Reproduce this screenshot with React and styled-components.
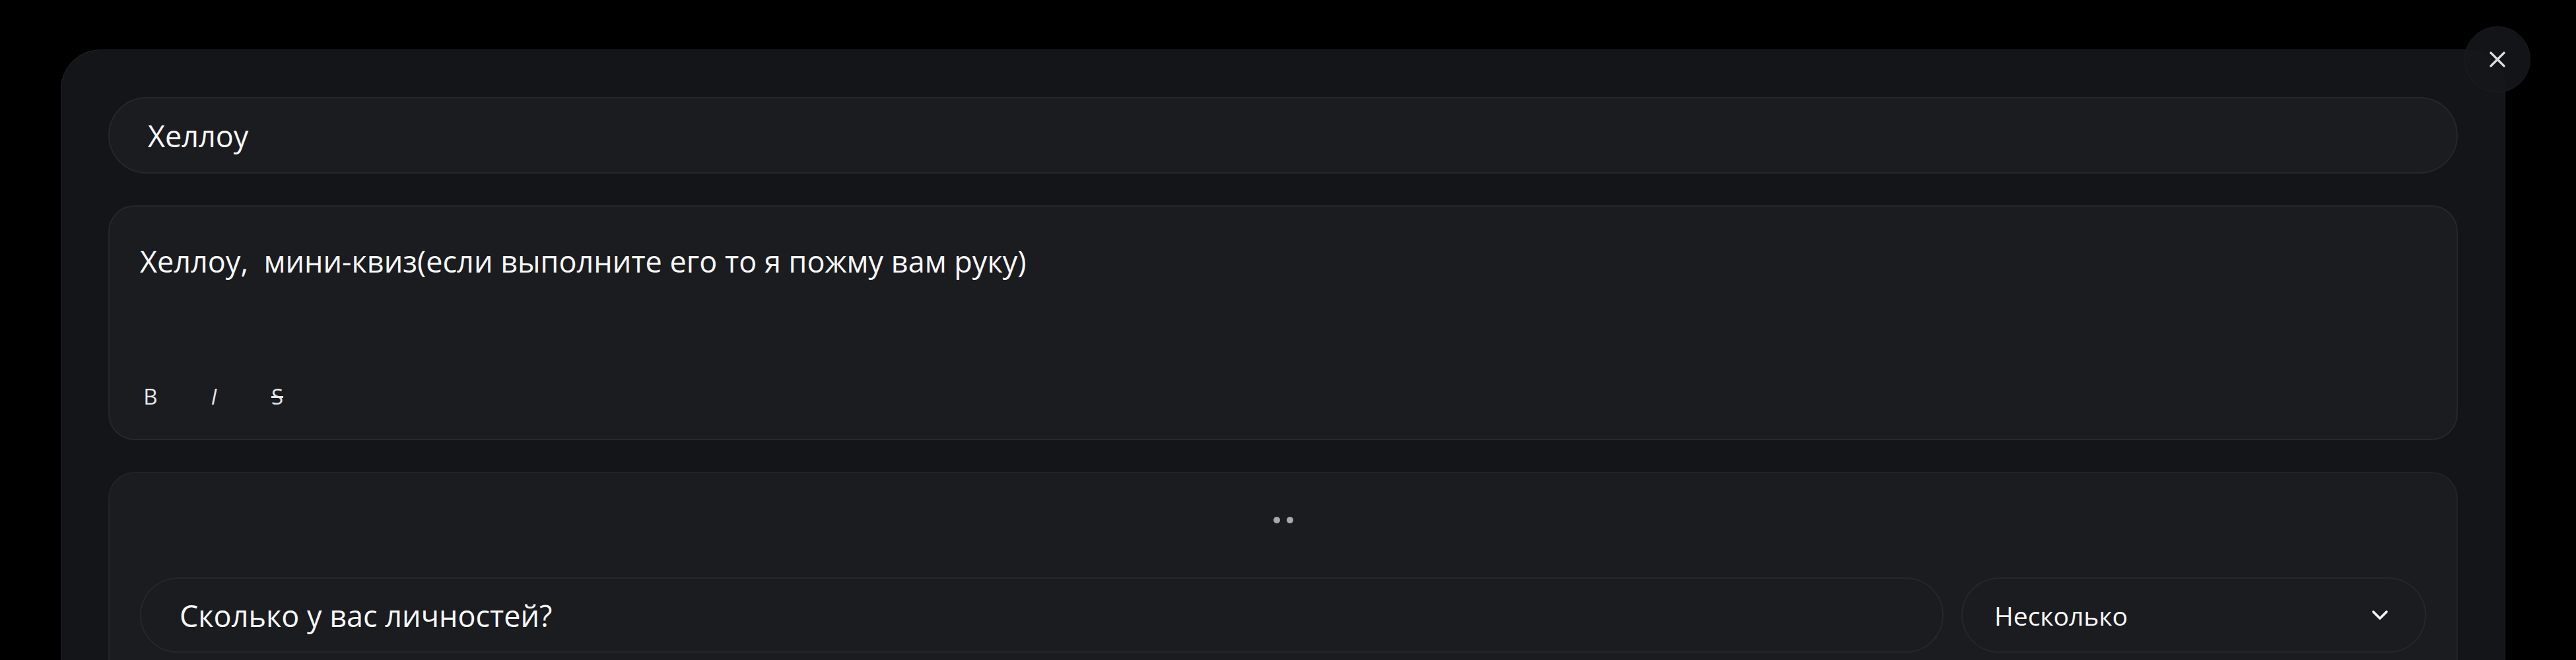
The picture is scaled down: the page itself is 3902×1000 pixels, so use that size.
import React, { useState } from 'react';
import styled, { createGlobalStyle } from 'styled-components';
import { X, ChevronDown } from 'lucide-react';

const GlobalStyle = createGlobalStyle`
  html, body {
    margin: 0;
    padding: 0;
    background: #000;
  }
  body {
    font-family: "Open Sans", "Noto Sans", sans-serif;
    color: #f4f4f5;
  }
  * {
    box-sizing: border-box;
  }
`;

const App = () => {
  const [title, setTitle] = useState('Хеллоу');
  const [question, setQuestion] = useState('Сколько у вас личностей?');

  return (
    <>
      <GlobalStyle />
      <Page>
        <Modal>
          <CloseButton type="button" aria-label="Закрыть">
            <X size={40} strokeWidth={2} />
          </CloseButton>

          <TitleInput value={title} onChange={(e) => setTitle(e.target.value)} />

          <EditorCard>
            <EditorText>Хеллоу,&nbsp; мини-квиз(если выполните его то я пожму вам руку)</EditorText>
            <Toolbar>
              <FormatButton type="button">B</FormatButton>
              <FormatButton type="button" $italic>I</FormatButton>
              <FormatButton type="button" $strike>S</FormatButton>
            </Toolbar>
          </EditorCard>

          <QuestionCard>
            <DragHandle>
              <Dot />
              <Dot />
            </DragHandle>
            <QuestionRow>
              <QuestionInput value={question} onChange={(e) => setQuestion(e.target.value)} />
              <Select type="button">
                <span>Несколько</span>
                <ChevronDown size={40} strokeWidth={2.2} />
              </Select>
            </QuestionRow>
          </QuestionCard>
        </Modal>
      </Page>
    </>
  );
};

const Page = styled.div`
  height: 1000px;
  overflow: hidden;
  padding: 75px 107px 0 92px;
  background: #000;
`;

const Modal = styled.div`
  position: relative;
  display: flex;
  flex-direction: column;
  gap: 48px;
  padding: 71px 71px 200px;
  background: #141518;
  border: 1px solid #232428;
  border-radius: 60px;
`;

const CloseButton = styled.button`
  position: absolute;
  top: -36px;
  right: -39px;
  width: 100px;
  height: 100px;
  border-radius: 50%;
  border: 1px solid rgba(255, 255, 255, 0.03);
  background: rgba(21, 22, 25, 0.9);
  color: #dcdce0;
  display: flex;
  align-items: center;
  justify-content: center;
  cursor: pointer;
  padding: 0;
`;

const PillInput = styled.input`
  height: 116px;
  border-radius: 58px;
  border: 2px solid #26272b;
  background: #1b1c1f;
  color: #f7f7f8;
  font-family: inherit;
  font-size: 45px;
  font-weight: 500;
  padding: 0 58px;
  outline: none;
`;

const TitleInput = styled(PillInput)`
  width: 100%;
`;

const EditorCard = styled.div`
  display: flex;
  flex-direction: column;
  height: 356px;
  padding: 48px 46px;
  background: #1b1c1f;
  border: 2px solid #26272b;
  border-radius: 40px;
`;

const EditorText = styled.div`
  flex: 1;
  font-size: 45px;
  font-weight: 500;
  line-height: 1.55;
  color: #f7f7f8;
`;

const Toolbar = styled.div`
  display: flex;
  align-items: center;
  gap: 56px;
  height: 32px;
  margin-left: -4px;
`;

const FormatButton = styled.button`
  width: 40px;
  height: 32px;
  padding: 0;
  border: none;
  background: none;
  color: #e6e6e8;
  font-family: inherit;
  font-size: 33px;
  line-height: 32px;
  font-weight: 500;
  font-style: ${(p) => (p.$italic ? 'italic' : 'normal')};
  text-decoration: ${(p) => (p.$strike ? 'line-through' : 'none')};
  cursor: pointer;
`;

const QuestionCard = styled.div`
  display: flex;
  flex-direction: column;
  align-items: center;
  padding: 66px 46px 120px;
  background: #1b1c1f;
  border: 2px solid #222327;
  border-radius: 40px;
`;

const DragHandle = styled.div`
  display: flex;
  gap: 10px;
  height: 10px;
  margin-bottom: 82px;
`;

const Dot = styled.span`
  width: 10px;
  height: 10px;
  border-radius: 50%;
  background: #a9a9ad;
`;

const QuestionRow = styled.div`
  display: flex;
  align-self: stretch;
  gap: 27px;
`;

const QuestionInput = styled(PillInput)`
  flex: 1;
  height: 114px;
  padding: 0 58px;
`;

const Select = styled.button`
  width: 704px;
  height: 114px;
  display: flex;
  align-items: center;
  justify-content: space-between;
  padding: 0 48px 0 48px;
  border-radius: 57px;
  border: 2px solid #26272b;
  background: #1b1c1f;
  color: #f7f7f8;
  font-family: inherit;
  font-size: 39px;
  font-weight: 500;
  cursor: pointer;
`;

export default App;
